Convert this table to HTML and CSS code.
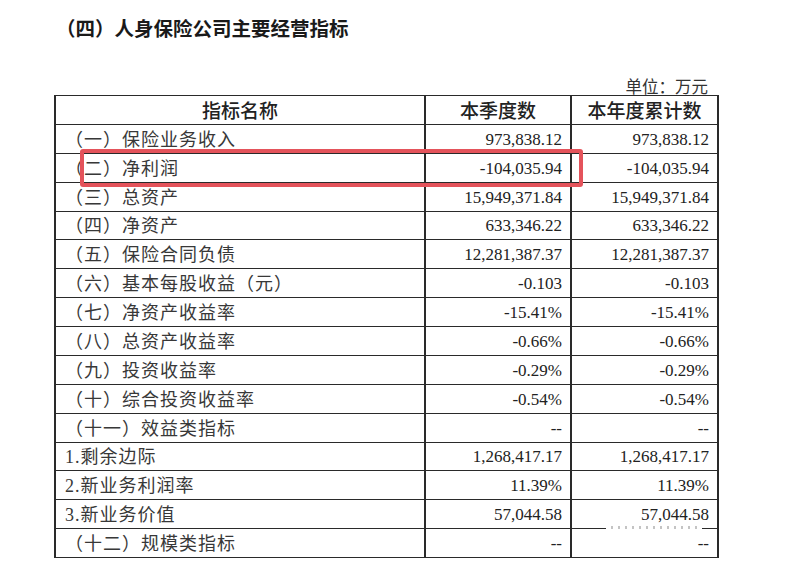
FILE: index.html
```html
<!DOCTYPE html>
<html lang="zh-CN">
<head>
<meta charset="utf-8">
<title>人身保险公司主要经营指标</title>
<link rel="stylesheet" href="styles.css">
</head>
<body>
<div class="page">
  <h1 class="title">（四）人身保险公司主要经营指标</h1>
  <div class="sheet">
    <div class="unit">单位：万元</div>
    <div class="table-wrap">
      <table class="data">
        <colgroup>
          <col class="c-name">
          <col class="c-q">
          <col class="c-y">
        </colgroup>
        <thead>
          <tr>
            <th>指标名称</th>
            <th>本季度数</th>
            <th>本年度累计数</th>
          </tr>
        </thead>
        <tbody>
          <tr><td class="name">（一）保险业务收入</td><td class="num">973,838.12</td><td class="num">973,838.12</td></tr>
          <tr><td class="name">（二）净利润</td><td class="num">-104,035.94</td><td class="num">-104,035.94</td></tr>
          <tr><td class="name">（三）总资产</td><td class="num">15,949,371.84</td><td class="num">15,949,371.84</td></tr>
          <tr><td class="name">（四）净资产</td><td class="num">633,346.22</td><td class="num">633,346.22</td></tr>
          <tr><td class="name">（五）保险合同负债</td><td class="num">12,281,387.37</td><td class="num">12,281,387.37</td></tr>
          <tr><td class="name">（六）基本每股收益（元）</td><td class="num">-0.103</td><td class="num">-0.103</td></tr>
          <tr><td class="name">（七）净资产收益率</td><td class="num">-15.41%</td><td class="num">-15.41%</td></tr>
          <tr><td class="name">（八）总资产收益率</td><td class="num">-0.66%</td><td class="num">-0.66%</td></tr>
          <tr><td class="name">（九）投资收益率</td><td class="num">-0.29%</td><td class="num">-0.29%</td></tr>
          <tr><td class="name">（十）综合投资收益率</td><td class="num">-0.54%</td><td class="num">-0.54%</td></tr>
          <tr><td class="name">（十一）效益类指标</td><td class="num">--</td><td class="num">--</td></tr>
          <tr><td class="name">1.剩余边际</td><td class="num">1,268,417.17</td><td class="num">1,268,417.17</td></tr>
          <tr><td class="name">2.新业务利润率</td><td class="num">11.39%</td><td class="num">11.39%</td></tr>
          <tr><td class="name">3.新业务价值</td><td class="num">57,044.58</td><td class="num">57,044.58</td></tr>
          <tr><td class="name">（十二）规模类指标</td><td class="num">--</td><td class="num">--</td></tr>
        </tbody>
      </table>
      <div class="highlight"></div>
      <div class="wm"></div>
    </div>
  </div>
</div>
</body>
</html>
```

FILE: styles.css
```css
html, body {
  margin: 0;
  padding: 0;
  background: #ffffff;
}

.page {
  width: 800px;
  height: 568px;
  overflow: hidden;
  font-family: "Liberation Serif", "Noto Sans CJK SC", serif;
  color: #2b2b2b;
}

.title {
  margin: 0;
  padding: 17px 0 0 56px;
  font-family: "Noto Sans CJK SC", sans-serif;
  font-size: 19.5px;
  line-height: 21px;
  font-weight: 700;
  color: #1a1a1a;
  letter-spacing: 0;
}

.sheet {
  margin-left: 54px;
  width: 663px;
  padding-top: 38px;
}

.unit {
  text-align: right;
  padding-right: 9px;
  font-family: "Noto Sans CJK SC", sans-serif;
  font-size: 16.5px;
  line-height: 20px;
  height: 19px;
  color: #333;
}

.table-wrap {
  position: relative;
}

.data {
  border-collapse: collapse;
  width: 663px;
  table-layout: fixed;
}

.c-name { width: 370px; }
.c-q { width: 146px; }
.c-y { width: 147px; }

.data tr {
  height: 28.875px;
}

.data th,
.data td {
  border-top: 1px solid #2a2a2a;
  border-bottom: 1px solid #2a2a2a;
  border-left: 2px solid #2a2a2a;
  border-right: 2px solid #2a2a2a;
  padding: 0;
  vertical-align: middle;
  white-space: nowrap;
  line-height: 20px;
}

.data th {
  font-family: "Noto Sans CJK SC", sans-serif;
  font-size: 19px;
  font-weight: 500;
  color: #222;
  text-align: center;
  padding-top: 1px;
}

.data td.name {
  font-size: 18px;
  letter-spacing: 1px;
  padding-left: 9px;
  padding-top: 2px;
  text-align: left;
  color: #383838;
}

.data td.num {
  font-size: 17px;
  padding-right: 8px;
  padding-top: 2px;
  text-align: right;
  color: #222;
}

.highlight {
  position: absolute;
  left: 26px;
  top: 54px;
  width: 503px;
  height: 38px;
  box-sizing: border-box;
  border: 4px solid #e4535b;
  border-radius: 3px;
}

.wm {
  position: absolute;
  left: 552px;
  top: 431px;
  width: 96px;
  height: 3px;
  background: repeating-linear-gradient(90deg, #ffffff 0 5px, #c4c4c4 5px 7px);
}
```
